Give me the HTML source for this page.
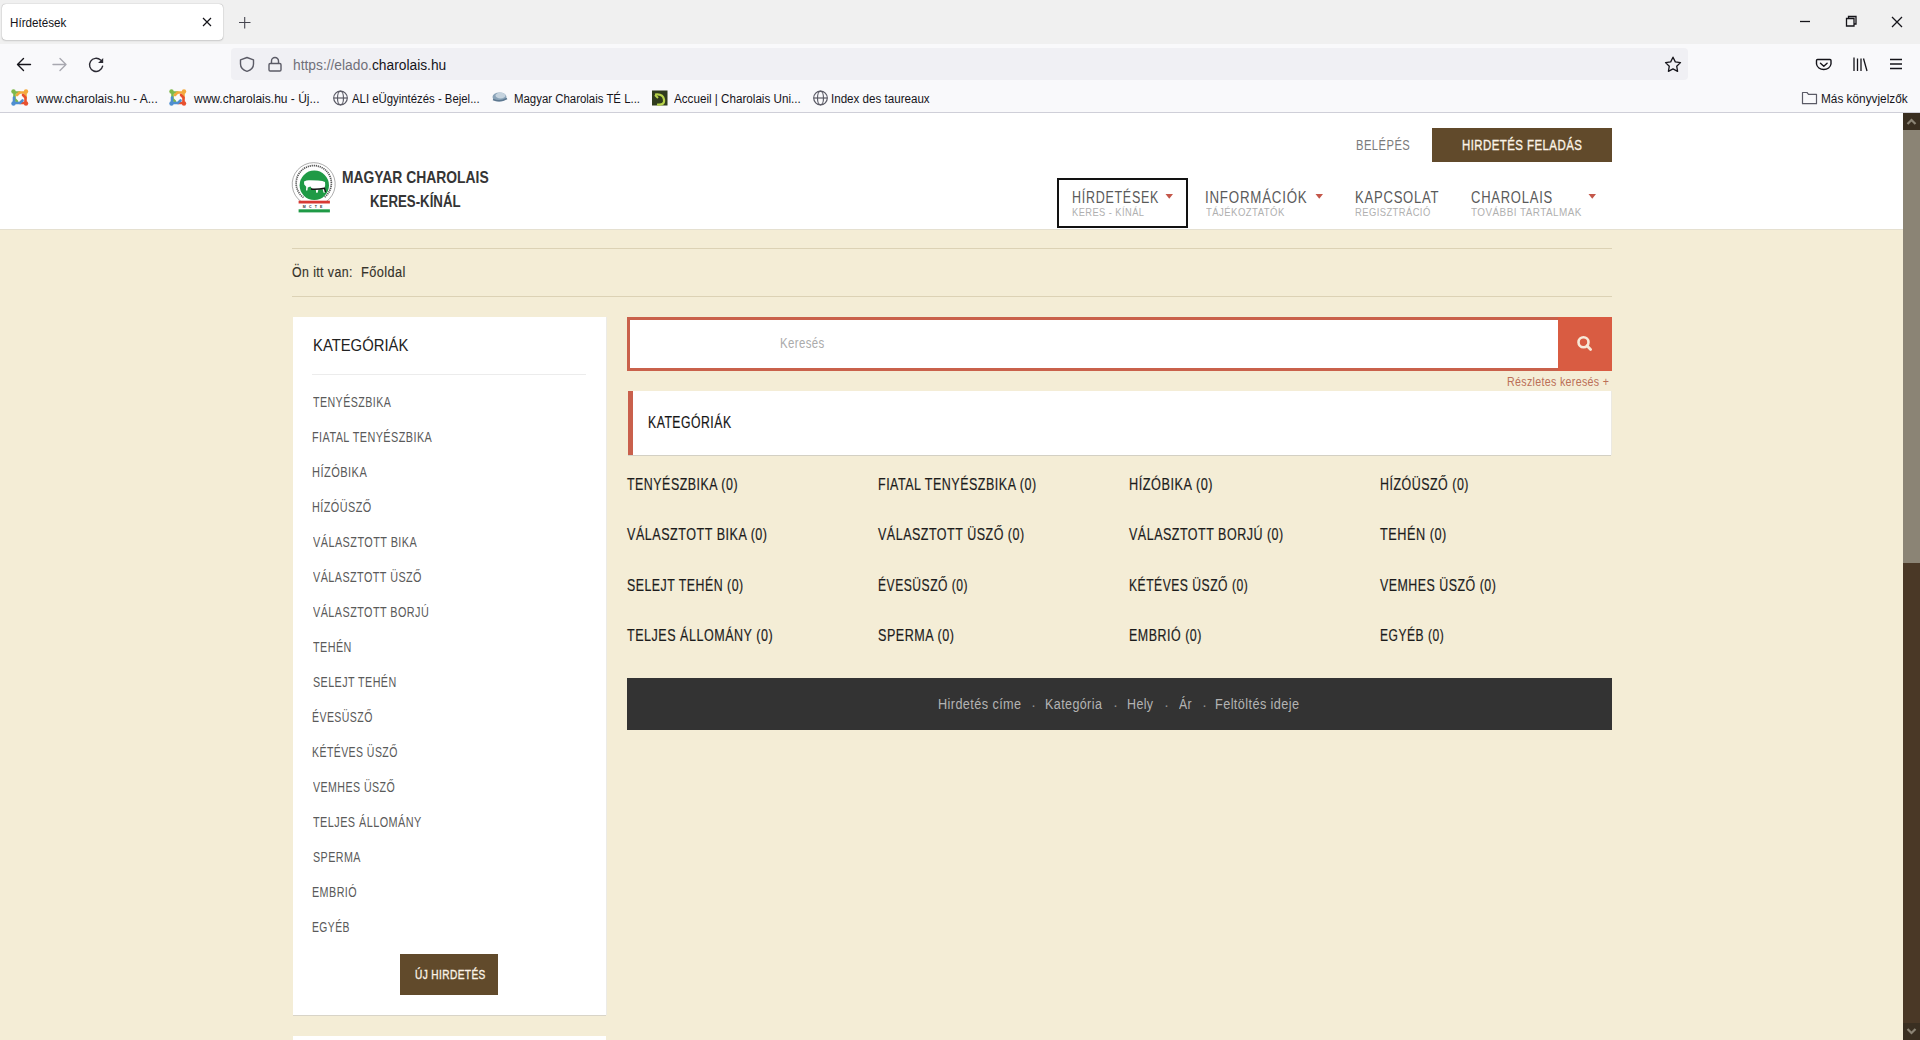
<!DOCTYPE html>
<html><head><meta charset="utf-8"><title>Hírdetések</title>
<style>
html,body{margin:0;padding:0;width:1920px;height:1040px;overflow:hidden;background:#f4edd6;font-family:"Liberation Sans",sans-serif;}
.a{position:absolute;}
.t{position:absolute;white-space:nowrap;transform-origin:0 0;}
svg{position:absolute;overflow:visible;}
</style></head><body>
<!-- tab strip -->
<div class="a" style="left:0;top:0;width:1920px;height:44px;background:#f0f0f0"></div>
<div class="a" style="left:2px;top:4px;width:221px;height:36px;background:#fff;border-radius:4px;box-shadow:0 0 1px rgba(0,0,0,.45),0 1px 2px rgba(0,0,0,.12)"></div>
<!-- toolbar + bookmarks -->
<div class="a" style="left:0;top:44px;width:1920px;height:68px;background:#f9f9fb"></div>
<div class="a" style="left:0;top:112px;width:1920px;height:1px;background:#cfcfd8"></div>
<div class="a" style="left:231px;top:48px;width:1457px;height:32px;background:#f0f0f4;border-radius:4px"></div>

<!-- tab close x, new tab + -->
<svg style="left:0;top:0" width="1920" height="112">
 <g stroke="#15141a" stroke-width="1.3" fill="none">
  <path d="M203 18l8 8M211 18l-8 8" stroke-width="1.2"/>
  <path d="M244.7 17v11.5M239 22.5h11.5" stroke="#45454f" stroke-width="1.1"/>
  <!-- window controls -->
  <path d="M1800 21.5h10" />
  <path d="M1846.5 18.5h7.5v7.5h-7.5z M1848.5 18.5v-2h7.5v7.5h-2"/>
  <path d="M1892 17l10 10M1902 17l-10 10"/>
 </g>
 <!-- back / forward / reload -->
 <g stroke="#15141a" stroke-width="1.4" fill="none" stroke-linecap="round" stroke-linejoin="round">
  <path d="M17.5 64.5h13M23.5 58.5l-6 6 6 6"/>
 </g>
 <g stroke="#a8a8b0" stroke-width="1.4" fill="none" stroke-linecap="round" stroke-linejoin="round">
  <path d="M53 64.5h13M60 58.5l6 6-6 6"/>
 </g>
 <path d="M102.6 66.2A6.6 6.6 0 1 1 100.6 60" stroke="#2b2a33" stroke-width="1.4" fill="none" stroke-linecap="round"/>
 <path d="M103.2 57.9V63H98.1z" fill="#2b2a33"/>
 <!-- shield -->
 <g stroke="#5b5b66" stroke-width="1.4" fill="none" stroke-linejoin="round">
  <path d="M247 57.5l-6.5 2.3v4.2c0 4 3 6.2 6.5 7.3 3.5-1.1 6.5-3.3 6.5-7.3v-4.2z"/>
 </g>
 <!-- lock -->
 <g stroke="#5b5b66" stroke-width="1.4" fill="none">
  <rect x="269" y="63.5" width="12" height="7.5" rx="1.2"/>
  <path d="M271.5 63.5v-2.5a3.5 3.5 0 0 1 7 0v2.5"/>
 </g>
 <!-- star -->
 <path d="M1673 57.2l2.3 4.7 5.2.7-3.8 3.6.9 5.1-4.6-2.4-4.6 2.4.9-5.1-3.8-3.6 5.2-.7z" fill="none" stroke="#15141a" stroke-width="1.3" stroke-linejoin="round"/>
 <!-- pocket -->
 <g stroke="#15141a" stroke-width="1.4" fill="none" stroke-linecap="round" stroke-linejoin="round">
  <path d="M1817.5 59.5h12.5a1 1 0 0 1 1 1v3.5a7.3 6.3 0 0 1-14.5 0v-3.5a1 1 0 0 1 1-1z"/>
  <path d="M1820.5 63.2l3.3 3.1 3.3-3.1"/>
 </g>
 <!-- library -->
 <g stroke="#15141a" stroke-width="1.3" fill="none">
  <path d="M1854 57.5v13.5M1857.5 58.5v12.5M1861 58.5v12.5M1863.5 58.5l3.5 12.5"/>
 </g>
 <!-- hamburger -->
 <g stroke="#15141a" stroke-width="1.3" fill="none">
  <path d="M1890 59.5h12M1890 64h12M1890 68.5h12"/>
 </g>
 <!-- joomla icons -->
 <g id="jm" stroke-width="2.6" fill="none" stroke-linecap="round">
  <path d="M14 92.5h5.5M14.5 92.5v6.5l2.5 2.5" stroke="#7eb84a"/>
  <path d="M25.5 92.5v5.5M25.5 92.5h-6l-2.5 2.5" stroke="#f3a93c"/>
  <path d="M25.5 103h-5.5M25.5 103v-5.5l-2.5-2.5" stroke="#e8502e"/>
  <path d="M14 103v-5.5M14 103h6l2.5-2.5" stroke="#4e8ed0"/>
  <circle cx="13.5" cy="91.5" r="2.2" fill="#7eb84a" stroke="none"/>
  <circle cx="26" cy="91.5" r="2.2" fill="#f3a93c" stroke="none"/>
  <circle cx="26" cy="103.5" r="2.2" fill="#e8502e" stroke="none"/>
  <circle cx="13.5" cy="103.5" r="2.2" fill="#4e8ed0" stroke="none"/>
 </g>
 <g transform="translate(158 0)" stroke-width="2.6" fill="none" stroke-linecap="round">
  <path d="M14 92.5h5.5M14.5 92.5v6.5l2.5 2.5" stroke="#7eb84a"/>
  <path d="M25.5 92.5v5.5M25.5 92.5h-6l-2.5 2.5" stroke="#f3a93c"/>
  <path d="M25.5 103h-5.5M25.5 103v-5.5l-2.5-2.5" stroke="#e8502e"/>
  <path d="M14 103v-5.5M14 103h6l2.5-2.5" stroke="#4e8ed0"/>
  <circle cx="13.5" cy="91.5" r="2.2" fill="#7eb84a" stroke="none"/>
  <circle cx="26" cy="91.5" r="2.2" fill="#f3a93c" stroke="none"/>
  <circle cx="26" cy="103.5" r="2.2" fill="#e8502e" stroke="none"/>
  <circle cx="13.5" cy="103.5" r="2.2" fill="#4e8ed0" stroke="none"/>
 </g>
 <!-- globes -->
 <g id="gl" stroke="#5b5b66" stroke-width="1.2" fill="none">
  <circle cx="340.5" cy="98" r="6.8"/>
  <ellipse cx="340.5" cy="98" rx="3" ry="6.8"/>
  <path d="M333.7 98h13.6"/>
 </g>
 <g transform="translate(480 0)" stroke="#5b5b66" stroke-width="1.2" fill="none">
  <circle cx="340.5" cy="98" r="6.8"/>
  <ellipse cx="340.5" cy="98" rx="3" ry="6.8"/>
  <path d="M333.7 98h13.6"/>
 </g>
 <!-- magyar icon -->
 <ellipse cx="499.5" cy="97" rx="7" ry="4.5" fill="#8aa3b8"/>
 <ellipse cx="500.5" cy="95.5" rx="5" ry="3" fill="#c5d3de"/>
 <path d="M493 99.5q7 3 14-1" stroke="#5d7890" stroke-width="1.5" fill="none"/>
 <!-- accueil icon -->
 <rect x="652" y="90.5" width="15.5" height="15" fill="#2f3b1d"/>
 <path d="M655 94.5q8-1 9 5t-7 5" stroke="#b7d34a" stroke-width="2.2" fill="none"/>
 <path d="M655 95l3 3" stroke="#b7d34a" stroke-width="2"/>
 <!-- folder -->
 <path d="M1802.5 92.5h4.5l1.5 1.8h8v9.4h-14z" fill="none" stroke="#5b5b66" stroke-width="1.2" stroke-linejoin="round"/>
</svg>

<!-- page -->
<div class="a" style="left:0;top:113px;width:1903px;height:116px;background:#fff"></div>
<div class="a" style="left:0;top:229px;width:1903px;height:1px;background:#e5e0d0"></div>
<!-- header button -->
<div class="a" style="left:1432px;top:128px;width:180px;height:34px;background:#614a2b"></div>
<!-- nav focus box -->
<div class="a" style="left:1057px;top:178px;width:127px;height:46px;border:2px solid #121212"></div>
<svg style="left:0;top:0" width="1903" height="240">
 <path d="M1165.5 194h7.5l-3.75 4.7z M1315.5 194h7.5l-3.75 4.7z M1588.5 194h7.5l-3.75 4.7z" fill="#c4574a"/>
 <!-- logo -->
 <path d="M301.4 201.8A21.5 21.5 0 1 1 326 201.8" fill="none" stroke="#8a8a8a" stroke-width="0.7"/>
 <path d="M303.5 197.5A17.6 17.6 0 1 1 324 197.5" fill="none" stroke="#555" stroke-width="1.7" stroke-dasharray="1.2 0.8"/>
 <circle cx="314.3" cy="185.3" r="14.7" fill="#1f9a46"/>
 <path d="M304 181.5q3-1.6 6-1.2l8 0.3q5 .2 7 1.5.6 3-.4 5.6l.3 5h-1.3l-1-3.6-4.2.4-.8 3.3h-1.4l-.4-3.4-3.8-.6-1.6-2.4-2.6 1-.4 3.2h-1.4l.2-3.8-2-2.2z" fill="#fff"/>
 <path d="M311 189q6 .6 13.5-.8l1 4" stroke="#111" stroke-width="1.4" fill="none"/>
 <rect x="298.6" y="200.7" width="31.3" height="2.8" fill="#d83a34"/>
 <rect x="298.6" y="209.3" width="31.3" height="3.1" fill="#1f9a46"/>
 <text x="314.2" y="208" font-size="3.6" text-anchor="middle" fill="#333" font-family="Liberation Sans" font-weight="700" letter-spacing="3.2">MCTE</text>
</svg>
<!-- breadcrumb lines -->
<div class="a" style="left:292px;top:248px;width:1320px;height:1px;background:#dcd2b5"></div>
<div class="a" style="left:292px;top:296px;width:1320px;height:1px;background:#dcd2b5"></div>

<!-- sidebar -->
<div class="a" style="left:293px;top:317px;width:313px;height:698px;background:#fff;box-shadow:0 1px 0 #d8d4c8,1px 0 0 #ecebe6"></div>
<div class="a" style="left:312px;top:374px;width:274px;height:1px;background:#ececec"></div>
<div class="a" style="left:400px;top:954px;width:98px;height:41px;background:#614a2b"></div>
<div class="a" style="left:293px;top:1036px;width:313px;height:20px;background:#fff"></div>

<!-- search -->
<div class="a" style="left:627px;top:317px;width:928px;height:48px;background:#fff;border:3px solid #c9614b;border-right:none"></div>
<div class="a" style="left:1558px;top:317px;width:54px;height:54px;background:#d95c42"></div>
<svg style="left:0;top:0" width="1903" height="400">
 <circle cx="1583.5" cy="342.2" r="5" fill="none" stroke="#f7e9d8" stroke-width="2.6"/>
 <path d="M1587 345.8l3.6 3.6" stroke="#f7e9d8" stroke-width="2.8" stroke-linecap="round"/>
</svg>
<!-- kategoriak box -->
<div class="a" style="left:628px;top:391px;width:983px;height:64px;background:#fff;box-shadow:0 1px 0 #d3d0c4,1px 0 0 #ebe9e2"></div>
<div class="a" style="left:628px;top:391px;width:5px;height:64px;background:#c9604c"></div>
<!-- dark bar -->
<div class="a" style="left:627px;top:678px;width:985px;height:52px;background:#333333"></div>
<div class="t" style="left:1031px;top:697px;font-size:15px;line-height:15px;color:#8f8f8f">·</div>
<div class="t" style="left:1113px;top:697px;font-size:15px;line-height:15px;color:#8f8f8f">·</div>
<div class="t" style="left:1164px;top:697px;font-size:15px;line-height:15px;color:#8f8f8f">·</div>
<div class="t" style="left:1202px;top:697px;font-size:15px;line-height:15px;color:#8f8f8f">·</div>

<!-- scrollbar -->
<div class="a" style="left:1903px;top:113px;width:17px;height:927px;background:#4a3826"></div>
<div class="a" style="left:1903px;top:113px;width:17px;height:17px;background:#3a2f21"></div>
<div class="a" style="left:1903px;top:130px;width:17px;height:433px;background:#8b8475"></div>
<div class="a" style="left:1903px;top:1023px;width:17px;height:17px;background:#3a2f21"></div>
<svg style="left:0;top:0" width="1920" height="1040">
 <path d="M1907.5 124l4-4 4 4" stroke="#8b8475" stroke-width="2.2" fill="none"/>
 <path d="M1907.5 1029l4 4 4-4" stroke="#8b8475" stroke-width="2.2" fill="none"/>
</svg>

<span class="t" style="left:9.87px;top:15.00px;font-size:13px;line-height:15px;color:#15141a;transform:scaleX(0.8959);letter-spacing:0px;">Hírdetések</span>
<span class="t" style="left:293.07px;top:57.00px;font-size:14px;line-height:16px;color:#15141a;transform:scaleX(0.9845);letter-spacing:0px;"><span style="color:#70707a">https://elado.</span>charolais.hu</span>
<span class="t" style="left:35.62px;top:92.00px;font-size:12.5px;line-height:14px;color:#15141a;transform:scaleX(0.9631);letter-spacing:0px;">www.charolais.hu - A...</span>
<span class="t" style="left:194.12px;top:92.00px;font-size:12.5px;line-height:14px;color:#15141a;transform:scaleX(0.9612);letter-spacing:0px;">www.charolais.hu - Új...</span>
<span class="t" style="left:352.20px;top:92.00px;font-size:12.5px;line-height:14px;color:#15141a;transform:scaleX(0.9092);letter-spacing:0px;">ALI eÜgyintézés - Bejel...</span>
<span class="t" style="left:513.59px;top:92.00px;font-size:12.5px;line-height:14px;color:#15141a;transform:scaleX(0.9130);letter-spacing:0px;">Magyar Charolais TÉ L...</span>
<span class="t" style="left:673.80px;top:92.00px;font-size:12.5px;line-height:14px;color:#15141a;transform:scaleX(0.9322);letter-spacing:0px;">Accueil | Charolais Uni...</span>
<span class="t" style="left:831.46px;top:92.00px;font-size:12.5px;line-height:14px;color:#15141a;transform:scaleX(0.9279);letter-spacing:0px;">Index des taureaux</span>
<span class="t" style="left:1820.76px;top:92.00px;font-size:12.5px;line-height:14px;color:#15141a;transform:scaleX(0.9447);letter-spacing:0px;">Más könyvjelzők</span>
<span class="t" style="left:1356.00px;top:136.00px;font-size:15.5px;line-height:17px;color:#7b7b7b;transform:scaleX(0.7248);letter-spacing:0.6px;">BELÉPÉS</span>
<span class="t" style="left:1462.28px;top:136.00px;font-size:15.5px;line-height:17px;color:#fbf3e6;transform:scaleX(0.7383);letter-spacing:0.6px;-webkit-text-stroke:0.35px #fbf3e6;">HIRDETÉS FELADÁS</span>
<span class="t" style="left:341.77px;top:167.00px;font-size:17.3px;line-height:20px;color:#353535;transform:scaleX(0.8027);letter-spacing:0px;font-weight:700;">MAGYAR CHAROLAIS</span>
<span class="t" style="left:370.10px;top:191.00px;font-size:17.3px;line-height:20px;color:#353535;transform:scaleX(0.7670);letter-spacing:0px;font-weight:700;">KERES-KÍNÁL</span>
<span class="t" style="left:1071.70px;top:189.00px;font-size:15.6px;line-height:17px;color:#5a5a5a;transform:scaleX(0.8015);letter-spacing:0.9px;">HÍRDETÉSEK</span>
<span class="t" style="left:1071.95px;top:206.00px;font-size:11px;line-height:12px;color:#b0b0b0;transform:scaleX(0.8484);letter-spacing:0.5px;">KERES - KÍNÁL</span>
<span class="t" style="left:1205.10px;top:189.00px;font-size:15.6px;line-height:17px;color:#5a5a5a;transform:scaleX(0.8549);letter-spacing:0.9px;">INFORMÁCIÓK</span>
<span class="t" style="left:1206.11px;top:206.00px;font-size:11px;line-height:12px;color:#b0b0b0;transform:scaleX(0.8691);letter-spacing:0.5px;">TÁJÉKOZTATÓK</span>
<span class="t" style="left:1354.65px;top:189.00px;font-size:15.6px;line-height:17px;color:#5a5a5a;transform:scaleX(0.8389);letter-spacing:0.9px;">KAPCSOLAT</span>
<span class="t" style="left:1354.95px;top:206.00px;font-size:11px;line-height:12px;color:#b0b0b0;transform:scaleX(0.8545);letter-spacing:0.5px;">REGISZTRÁCIÓ</span>
<span class="t" style="left:1470.75px;top:189.00px;font-size:15.6px;line-height:17px;color:#5a5a5a;transform:scaleX(0.8344);letter-spacing:0.9px;">CHAROLAIS</span>
<span class="t" style="left:1471.20px;top:206.00px;font-size:11px;line-height:12px;color:#b0b0b0;transform:scaleX(0.9010);letter-spacing:0.5px;">TOVÁBBI TARTALMAK</span>
<span class="t" style="left:291.71px;top:263.00px;font-size:15.5px;line-height:17px;color:#36332b;transform:scaleX(0.7982);letter-spacing:0.5px;-webkit-text-stroke:0.15px #36332b;">Ön itt van:</span>
<span class="t" style="left:360.98px;top:263.00px;font-size:15.5px;line-height:17px;color:#36332b;transform:scaleX(0.8251);letter-spacing:0.5px;-webkit-text-stroke:0.15px #36332b;">Főoldal</span>
<span class="t" style="left:312.71px;top:336.00px;font-size:17px;line-height:19px;color:#222222;transform:scaleX(0.8721);letter-spacing:0px;">KATEGÓRIÁK</span>
<span class="t" style="left:312.79px;top:394.00px;font-size:14.5px;line-height:16px;color:#5a5a5a;transform:scaleX(0.7344);letter-spacing:0.6px;">TENYÉSZBIKA</span>
<span class="t" style="left:312.13px;top:429.00px;font-size:14.5px;line-height:16px;color:#5a5a5a;transform:scaleX(0.7474);letter-spacing:0.6px;">FIATAL TENYÉSZBIKA</span>
<span class="t" style="left:312.12px;top:464.00px;font-size:14.5px;line-height:16px;color:#5a5a5a;transform:scaleX(0.7617);letter-spacing:0.6px;">HÍZÓBIKA</span>
<span class="t" style="left:312.13px;top:499.00px;font-size:14.5px;line-height:16px;color:#5a5a5a;transform:scaleX(0.7494);letter-spacing:0.6px;">HÍZÓÜSZŐ</span>
<span class="t" style="left:313.00px;top:534.00px;font-size:14.5px;line-height:16px;color:#5a5a5a;transform:scaleX(0.7498);letter-spacing:0.6px;">VÁLASZTOTT BIKA</span>
<span class="t" style="left:313.00px;top:569.00px;font-size:14.5px;line-height:16px;color:#5a5a5a;transform:scaleX(0.7451);letter-spacing:0.6px;">VÁLASZTOTT ÜSZŐ</span>
<span class="t" style="left:313.00px;top:604.00px;font-size:14.5px;line-height:16px;color:#5a5a5a;transform:scaleX(0.7465);letter-spacing:0.6px;">VÁLASZTOTT BORJÚ</span>
<span class="t" style="left:312.78px;top:639.00px;font-size:14.5px;line-height:16px;color:#5a5a5a;transform:scaleX(0.7429);letter-spacing:0.6px;">TEHÉN</span>
<span class="t" style="left:312.57px;top:674.00px;font-size:14.5px;line-height:16px;color:#5a5a5a;transform:scaleX(0.7401);letter-spacing:0.6px;">SELEJT TEHÉN</span>
<span class="t" style="left:312.16px;top:709.00px;font-size:14.5px;line-height:16px;color:#5a5a5a;transform:scaleX(0.7256);letter-spacing:0.6px;">ÉVESÜSZŐ</span>
<span class="t" style="left:312.16px;top:744.00px;font-size:14.5px;line-height:16px;color:#5a5a5a;transform:scaleX(0.7245);letter-spacing:0.6px;">KÉTÉVES ÜSZŐ</span>
<span class="t" style="left:313.00px;top:779.00px;font-size:14.5px;line-height:16px;color:#5a5a5a;transform:scaleX(0.7325);letter-spacing:0.6px;">VEMHES ÜSZŐ</span>
<span class="t" style="left:312.78px;top:814.00px;font-size:14.5px;line-height:16px;color:#5a5a5a;transform:scaleX(0.7491);letter-spacing:0.6px;">TELJES ÁLLOMÁNY</span>
<span class="t" style="left:312.57px;top:849.00px;font-size:14.5px;line-height:16px;color:#5a5a5a;transform:scaleX(0.7394);letter-spacing:0.6px;">SPERMA</span>
<span class="t" style="left:312.14px;top:884.00px;font-size:14.5px;line-height:16px;color:#5a5a5a;transform:scaleX(0.7421);letter-spacing:0.6px;">EMBRIÓ</span>
<span class="t" style="left:312.17px;top:919.00px;font-size:14.5px;line-height:16px;color:#5a5a5a;transform:scaleX(0.7145);letter-spacing:0.6px;">EGYÉB</span>
<span class="t" style="left:414.99px;top:967.00px;font-size:13px;line-height:15px;color:#fbf3e6;transform:scaleX(0.7789);letter-spacing:0.5px;-webkit-text-stroke:0.35px #fbf3e6;">ÚJ HIRDETÉS</span>
<span class="t" style="left:779.59px;top:335.00px;font-size:14.5px;line-height:16px;color:#ababab;transform:scaleX(0.7876);letter-spacing:0.5px;">Keresés</span>
<span class="t" style="left:1507.05px;top:374.00px;font-size:12.8px;line-height:15px;color:#bb6f57;transform:scaleX(0.8307);letter-spacing:0.4px;">Részletes keresés +</span>
<span class="t" style="left:647.72px;top:413.00px;font-size:17px;line-height:19px;color:#151515;transform:scaleX(0.7188);letter-spacing:0.7px;-webkit-text-stroke:0.2px #151515;">KATEGÓRIÁK</span>
<span class="t" style="left:626.65px;top:475.00px;font-size:17px;line-height:19px;color:#1c1c1c;transform:scaleX(0.7295);letter-spacing:0.7px;-webkit-text-stroke:0.2px #1c1c1c;">TENYÉSZBIKA (0)</span>
<span class="t" style="left:877.90px;top:475.00px;font-size:17px;line-height:19px;color:#1c1c1c;transform:scaleX(0.7343);letter-spacing:0.7px;-webkit-text-stroke:0.2px #1c1c1c;">FIATAL TENYÉSZBIKA (0)</span>
<span class="t" style="left:1128.98px;top:475.00px;font-size:17px;line-height:19px;color:#1c1c1c;transform:scaleX(0.7481);letter-spacing:0.7px;-webkit-text-stroke:0.2px #1c1c1c;">HÍZÓBIKA (0)</span>
<span class="t" style="left:1380.31px;top:475.00px;font-size:17px;line-height:19px;color:#1c1c1c;transform:scaleX(0.7308);letter-spacing:0.7px;-webkit-text-stroke:0.2px #1c1c1c;">HÍZÓÜSZŐ (0)</span>
<span class="t" style="left:626.80px;top:525.00px;font-size:17px;line-height:19px;color:#1c1c1c;transform:scaleX(0.7387);letter-spacing:0.7px;-webkit-text-stroke:0.2px #1c1c1c;">VÁLASZTOTT BIKA (0)</span>
<span class="t" style="left:877.70px;top:525.00px;font-size:17px;line-height:19px;color:#1c1c1c;transform:scaleX(0.7343);letter-spacing:0.7px;-webkit-text-stroke:0.2px #1c1c1c;">VÁLASZTOTT ÜSZŐ (0)</span>
<span class="t" style="left:1128.80px;top:525.00px;font-size:17px;line-height:19px;color:#1c1c1c;transform:scaleX(0.7341);letter-spacing:0.7px;-webkit-text-stroke:0.2px #1c1c1c;">VÁLASZTOTT BORJÚ (0)</span>
<span class="t" style="left:1379.95px;top:525.00px;font-size:17px;line-height:19px;color:#1c1c1c;transform:scaleX(0.7476);letter-spacing:0.7px;-webkit-text-stroke:0.2px #1c1c1c;">TEHÉN (0)</span>
<span class="t" style="left:627.01px;top:576.00px;font-size:17px;line-height:19px;color:#1c1c1c;transform:scaleX(0.7253);letter-spacing:0.7px;-webkit-text-stroke:0.2px #1c1c1c;">SELEJT TEHÉN (0)</span>
<span class="t" style="left:877.93px;top:576.00px;font-size:17px;line-height:19px;color:#1c1c1c;transform:scaleX(0.7124);letter-spacing:0.7px;-webkit-text-stroke:0.2px #1c1c1c;">ÉVESÜSZŐ (0)</span>
<span class="t" style="left:1129.03px;top:576.00px;font-size:17px;line-height:19px;color:#1c1c1c;transform:scaleX(0.7136);letter-spacing:0.7px;-webkit-text-stroke:0.2px #1c1c1c;">KÉTÉVES ÜSZŐ (0)</span>
<span class="t" style="left:1380.10px;top:576.00px;font-size:17px;line-height:19px;color:#1c1c1c;transform:scaleX(0.7285);letter-spacing:0.7px;-webkit-text-stroke:0.2px #1c1c1c;">VEMHES ÜSZŐ (0)</span>
<span class="t" style="left:626.65px;top:626.00px;font-size:17px;line-height:19px;color:#1c1c1c;transform:scaleX(0.7373);letter-spacing:0.7px;-webkit-text-stroke:0.2px #1c1c1c;">TELJES ÁLLOMÁNY (0)</span>
<span class="t" style="left:877.90px;top:626.00px;font-size:17px;line-height:19px;color:#1c1c1c;transform:scaleX(0.7391);letter-spacing:0.7px;-webkit-text-stroke:0.2px #1c1c1c;">SPERMA (0)</span>
<span class="t" style="left:1129.00px;top:626.00px;font-size:17px;line-height:19px;color:#1c1c1c;transform:scaleX(0.7319);letter-spacing:0.7px;-webkit-text-stroke:0.2px #1c1c1c;">EMBRIÓ (0)</span>
<span class="t" style="left:1380.33px;top:626.00px;font-size:17px;line-height:19px;color:#1c1c1c;transform:scaleX(0.7104);letter-spacing:0.7px;-webkit-text-stroke:0.2px #1c1c1c;">EGYÉB (0)</span>
<span class="t" style="left:937.99px;top:695.00px;font-size:15.5px;line-height:17px;color:#b3b3b3;transform:scaleX(0.8175);letter-spacing:0.5px;">Hirdetés címe</span>
<span class="t" style="left:1045.40px;top:695.00px;font-size:15.5px;line-height:17px;color:#b3b3b3;transform:scaleX(0.8081);letter-spacing:0.5px;">Kategória</span>
<span class="t" style="left:1126.90px;top:695.00px;font-size:15.5px;line-height:17px;color:#b3b3b3;transform:scaleX(0.8027);letter-spacing:0.5px;">Hely</span>
<span class="t" style="left:1178.60px;top:695.00px;font-size:15.5px;line-height:17px;color:#b3b3b3;transform:scaleX(0.7849);letter-spacing:0.5px;">Ár</span>
<span class="t" style="left:1215.38px;top:695.00px;font-size:15.5px;line-height:17px;color:#b3b3b3;transform:scaleX(0.8192);letter-spacing:0.5px;">Feltöltés ideje</span>
</body></html>
